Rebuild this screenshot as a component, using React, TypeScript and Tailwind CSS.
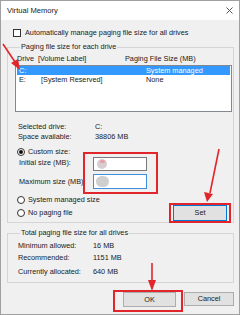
import React from "react";

const Radio = ({ checked }: { checked?: boolean }) => (
  <span className="w-[8px] h-[8px] rounded-full border border-[#333] bg-white flex items-center justify-center shrink-0">
    {checked && <span className="w-[4px] h-[4px] rounded-full bg-[#111]" />}
  </span>
);

export default function App() {
  return (
    <div
      className="relative w-[240px] h-[315px] overflow-hidden bg-[#f0f0f0] border border-[#a0a0a0] text-[7.3px] leading-[10px] text-[#1a1a1a]"
      style={{ fontFamily: '"Liberation Sans", Arial, sans-serif' }}
    >
      {/* Title bar */}
      <div className="h-[19px] bg-white flex items-center justify-between pl-[6px] pr-[5px]">
        <span className="text-[7.6px]">Virtual Memory</span>
        <svg width="7" height="7" viewBox="0 0 7 7" className="mr-[1px]">
          <path d="M0.5 0.5 L6.5 6.5 M6.5 0.5 L0.5 6.5" stroke="#444" strokeWidth="0.9" />
        </svg>
      </div>

      <div className="pl-[6px] pr-[5px] flex flex-col">
        {/* Checkbox */}
        <div className="mt-[9px] h-[8px] flex items-center pl-[6px]">
          <span className="w-[8px] h-[8px] border border-[#333] bg-white shrink-0" />
          <span className="ml-[4px] whitespace-nowrap">Automatically manage paging file size for all drives</span>
        </div>

        {/* Group 1 */}
        <fieldset className="mt-[5px] border border-[#d5d5d5] pl-[7px] pr-[1px] h-[181px]">
          <legend className="ml-[5px] px-[1px] leading-[10px] whitespace-nowrap">Paging file size for each drive</legend>
          <div className="mt-[2px] h-[9px] flex items-center whitespace-nowrap">
            <span className="pl-[2px] w-[110px]">Drive&nbsp; [Volume Label]</span>
            <span>Paging File Size (MB)</span>
          </div>
          <div className="mt-[2px] h-[47px] border border-[#828790] bg-white p-[1px] pt-0 flex flex-col">
            <div className="h-[9px] bg-[#3399ff] text-white flex items-center whitespace-nowrap">
              <span className="pl-[2px] w-[129px]">C:</span>
              <span>System managed</span>
            </div>
            <div className="h-[9px] flex items-center whitespace-nowrap">
              <span className="pl-[2px] w-[24px]">E:</span>
              <span className="w-[105px]">[System Reserved]</span>
              <span>None</span>
            </div>
          </div>

          <div className="mt-[10px] h-[10px] flex items-center pl-[3px]">
            <span className="w-[77px]">Selected drive:</span>
            <span>C:</span>
          </div>
          <div className="h-[10px] flex items-center pl-[3px]">
            <span className="w-[77px]">Space available:</span>
            <span>38806 MB</span>
          </div>

          {/* Custom size + inputs */}
          <div className="mt-[5px] flex">
            <div className="w-[68px] flex flex-col">
              <div className="h-[10px] flex items-center pl-[2px]">
                <Radio checked />
                <span className="ml-[3px] whitespace-nowrap">Custom size:</span>
              </div>
              <div className="mt-[1px] h-[10px] flex items-center pl-[4px] whitespace-nowrap">Initial size (MB):</div>
              <div className="mt-[9px] h-[10px] flex items-center pl-[4px] whitespace-nowrap">Maximum size (MB):</div>
            </div>
            <div className="mt-[5px] w-[75px] h-[42px] border-2 border-[#e0262b] flex flex-col pl-[8px] pt-[3px]">
              <div className="w-[54px] h-[14px] border border-[#7a7a7a] bg-white flex items-center pl-[3px]">
                <span className="w-[10px] h-[10px] rounded-full bg-[#d8cdd0] flex items-start justify-center">
                  <span className="mt-[1px] w-[5px] h-[3px] rounded-full bg-[#e6a0a6]" />
                </span>
              </div>
              <div className="mt-[3px] w-[54px] h-[15px] border border-[#3c8fe0] bg-white flex items-center pl-[2px]">
                <span className="w-[13px] h-[11px] rounded-full bg-[#cfcfcf]" />
              </div>
            </div>
          </div>

          {/* System managed / No paging / Set */}
          <div className="flex mt-[1px]">
            <div className="w-[154px] flex flex-col">
              <div className="h-[10px] flex items-center pl-[2px]">
                <Radio />
                <span className="ml-[3px] whitespace-nowrap">System managed size</span>
              </div>
              <div className="mt-[3px] h-[10px] flex items-center pl-[2px]">
                <Radio />
                <span className="ml-[3px] whitespace-nowrap">No paging file</span>
              </div>
            </div>
            <div className="mt-[8px] w-[62px] h-[20px] border-2 border-[#e0262b] px-[2px] py-0">
              <div className="h-full border border-[#0078d7] bg-[#e1e1e1] flex items-center justify-center">Set</div>
            </div>
          </div>
        </fieldset>

        {/* Group 2 */}
        <fieldset className="mt-[5px] border border-[#d5d5d5] pl-[7px] pr-[1px] pb-[5px]">
          <legend className="ml-[5px] px-[1px] leading-[10px] whitespace-nowrap">Total paging file size for all drives</legend>
          <div className="mt-[3px] h-[10px] flex items-center pl-[3px]">
            <span className="w-[75px]">Minimum allowed:</span>
            <span>16 MB</span>
          </div>
          <div className="mt-[2px] h-[10px] flex items-center pl-[3px]">
            <span className="w-[75px]">Recommended:</span>
            <span>1151 MB</span>
          </div>
          <div className="mt-[4px] h-[10px] flex items-center pl-[3px]">
            <span className="w-[75px]">Currently allocated:</span>
            <span>640 MB</span>
          </div>
        </fieldset>

        {/* Buttons */}
        <div className="mt-[7px] flex justify-end">
          <div className="w-[70px] h-[22px] border-2 border-[#e0262b] pl-[8px] pt-[0px]">
            <div className="w-[53px] h-[15px] border border-[#adadad] bg-[#e1e1e1] flex items-center justify-center">OK</div>
          </div>
          <div className="ml-[1px] mt-[2px] w-[50px] h-[14px] border border-[#adadad] bg-[#e1e1e1] flex items-center justify-center">Cancel</div>
        </div>
      </div>

      {/* Annotation arrows */}
      <svg className="absolute left-0 top-0 pointer-events-none" width="240" height="315" viewBox="0 0 240 315">
        <g stroke="#e0262b" strokeWidth="1.6" fill="#e0262b">
          <line x1="2" y1="43" x2="14" y2="61" />
          <polygon points="19,69 10,62 17,58" stroke="none" />
          <line x1="218" y1="148" x2="209" y2="192" />
          <polygon points="206,201 203,191 212,193" stroke="none" />
          <line x1="151" y1="262" x2="151" y2="281" />
          <polygon points="151,290 147,279 155,279" stroke="none" />
        </g>
      </svg>
    </div>
  );
}
